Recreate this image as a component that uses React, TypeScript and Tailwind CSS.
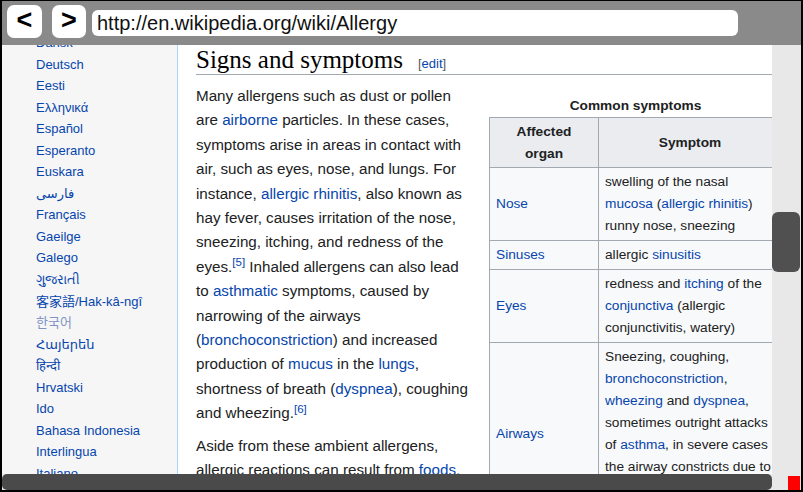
import React from 'react';

const languages = [
  'Dansk',
  'Deutsch',
  'Eesti',
  'Ελληνικά',
  'Español',
  'Esperanto',
  'Euskara',
  'فارسی',
  'Français',
  'Gaeilge',
  'Galego',
  'ગુજરાતી',
  '客家語/Hak-kâ-ngî',
  '한국어',
  'Հայերեն',
  'हिन्दी',
  'Hrvatski',
  'Ido',
  'Bahasa Indonesia',
  'Interlingua',
  'Italiano',
];

function L({ children }: { children: React.ReactNode }) {
  return <span className="text-[#0645ad]">{children}</span>;
}

function Ref({ n }: { n: number }) {
  return <sup className="text-[#0645ad] text-[11.5px]">[{n}]</sup>;
}

function TopBar() {
  return (
    <div className="h-[44px] shrink-0 bg-[#8a8a8a] flex items-start pl-[5px]">
      <button className="mt-[4px] w-[35px] h-[33px] rounded-[7px] bg-white flex items-center justify-center text-black font-bold text-[27px] leading-none pb-[3px]">
        &lt;
      </button>
      <button className="mt-[4px] ml-[10px] w-[34px] h-[33px] rounded-[7px] bg-white flex items-center justify-center text-black font-bold text-[27px] leading-none pb-[3px]">
        &gt;
      </button>
      <div className="mt-[9px] ml-[6px] w-[646px] h-[26px] rounded-[6px] bg-white flex items-center pl-[5px] text-[20px] text-[#111] leading-none">
        http://en.wikipedia.org/wiki/Allergy
      </div>
    </div>
  );
}

function Sidebar() {
  return (
    <div className="w-[176px] shrink-0 bg-[#f6f6f6] border-r border-[#a7d7f9] overflow-hidden">
      <ul className="mt-[-13px] pl-[34px] text-[13px] leading-[21.55px] font-['Liberation_Sans','DejaVu_Sans','Noto_Sans_CJK_SC',sans-serif]">
        {languages.map((l) => (
          <li
            key={l}
            className={l === '한국어' ? 'text-[#7f93c6] whitespace-nowrap' : 'text-[#0645ad] whitespace-nowrap'}
          >
            {l}
          </li>
        ))}
      </ul>
    </div>
  );
}

function SymptomsTable() {
  const cell = 'border border-[#a2a9b1] px-[6px] py-[3px]';
  return (
    <table className="border-collapse table-fixed w-[292px] text-[13.7px] leading-[22px] text-[#202122]">
      <caption className="font-bold leading-[22px]">Common symptoms</caption>
      <colgroup>
        <col className="w-[109px]" />
        <col className="w-[183px]" />
      </colgroup>
      <thead>
        <tr className="bg-[#eaecf0]">
          <th className="border border-[#a2a9b1] px-[6px] py-[2.5px]">
            Affected
            <br />
            organ
          </th>
          <th className="border border-[#a2a9b1] px-[6px] py-[2.5px]">Symptom</th>
        </tr>
      </thead>
      <tbody className="bg-[#f8f9fa]">
        <tr>
          <td className={cell}>
            <L>Nose</L>
          </td>
          <td className={cell}>
            swelling of the nasal <L>mucosa</L> (<L>allergic rhinitis</L>)
            <br />
            runny nose, sneezing
          </td>
        </tr>
        <tr>
          <td className={cell}>
            <L>Sinuses</L>
          </td>
          <td className={cell}>
            allergic <L>sinusitis</L>
          </td>
        </tr>
        <tr>
          <td className={cell}>
            <L>Eyes</L>
          </td>
          <td className={cell}>
            redness and <L>itching</L> of the <L>conjunctiva</L> (allergic conjunctivitis, watery)
          </td>
        </tr>
        <tr>
          <td className={cell}>
            <L>Airways</L>
          </td>
          <td className={cell}>
            Sneezing, coughing, <L>bronchoconstriction</L>, <L>wheezing</L> and <L>dyspnea</L>, sometimes
            outright attacks of <L>asthma</L>, in severe cases the airway constricts due to swelling
            known as laryngeal edema
          </td>
        </tr>
      </tbody>
    </table>
  );
}

function Article() {
  return (
    <div className="flex-1 min-w-0 overflow-hidden bg-white pl-[18px]">
      <h2 className="flex items-baseline border-b border-[#a2a9b1]">
        <span className="font-['Liberation_Serif',serif] text-[25px] leading-[29px] text-black">
          Signs and symptoms
        </span>
        <span className="ml-[15px] text-[13px] text-[#54595d]">
          [<L>edit</L>]
        </span>
      </h2>
      <div className="flex items-start">
        <div className="w-[277px] shrink-0 text-[15.2px] leading-[24.4px] text-[#202122]">
          <p className="mt-[9px]">
            Many allergens such as dust or pollen are <L>airborne</L> particles. In these cases,
            symptoms arise in areas in contact with air, such as eyes, nose, and lungs. For
            instance, <L>allergic rhinitis</L>, also known as hay fever, causes irritation of the
            nose, sneezing, itching, and redness of the eyes.
            <Ref n={5} /> Inhaled allergens can also lead to <L>asthmatic</L> symptoms, caused by
            narrowing of the airways (<L>bronchoconstriction</L>) and increased production of{' '}
            <L>mucus</L> in the <L>lungs</L>, shortness of breath (<L>dyspnea</L>), coughing and
            wheezing.
            <Ref n={6} />
          </p>
          <p className="mt-[8px]">
            Aside from these ambient allergens, allergic reactions can result from <L>foods</L>,
            insect stings, and reactions to medications like aspirin and antibiotics such as
            penicillin.
          </p>
        </div>
        <div className="ml-[16px] mt-[20px] shrink-0">
          <SymptomsTable />
        </div>
      </div>
    </div>
  );
}

export default function App() {
  return (
    <div className="w-[803px] h-[492px] bg-black pl-[2px] pr-[2px] pt-px pb-[2px] flex flex-col overflow-hidden font-['Liberation_Sans',Arial,sans-serif]">
      <TopBar />
      <div className="h-[429px] shrink-0 flex">
        <div className="w-[770px] shrink-0 flex overflow-hidden">
          <Sidebar />
          <Article />
        </div>
        <div className="w-[29px] shrink-0 bg-[#e8e8e8] pt-[167px]">
          <div className="w-[28px] h-[60px] rounded-[6px] bg-[#505050]" />
        </div>
      </div>
      <div className="h-[16px] shrink-0 bg-[#e8e8e8] flex">
        <div className="w-[770px] h-[16px] rounded-[5px] bg-[#4a4a4a]" />
        <div className="ml-[16px] mt-[2px] w-[12px] h-[14px] bg-[#ff0000]" />
      </div>
    </div>
  );
}
